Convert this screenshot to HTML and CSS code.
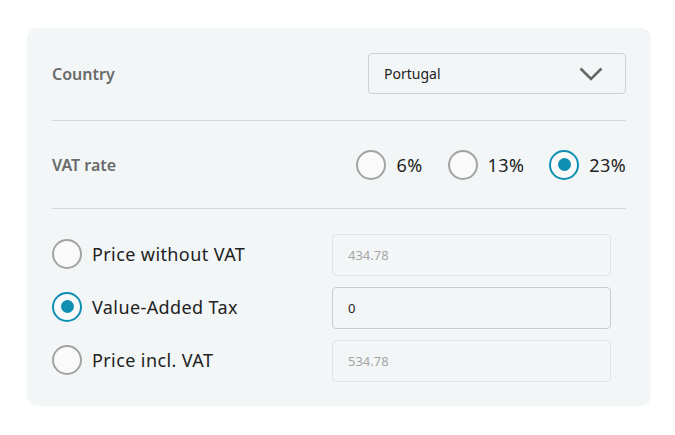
FILE: index.html
```html
<!DOCTYPE html>
<html>
<head>
<meta charset="utf-8">
<link rel="stylesheet" href="styles.css">
</head>
<body>
<div class="card">
  <div class="row first">
    <span class="label">Country</span>
    <div class="select">
      <span>Portugal</span>
      <svg class="chev" width="24" height="14" viewBox="0 0 24 14"><path d="M1.5 1.5 L12 12 L22.5 1.5" fill="none" stroke="#666" stroke-width="2.6"/></svg>
    </div>
  </div>
  <div class="divider"></div>
  <div class="row second">
    <span class="label">VAT rate</span>
    <div class="rates">
      <label class="opt"><span class="radio"></span><span>6%</span></label>
      <label class="opt"><span class="radio"></span><span>13%</span></label>
      <label class="opt"><span class="radio on"></span><span>23%</span></label>
    </div>
  </div>
  <div class="divider"></div>
  <div class="calc">
    <label class="opt big"><span class="radio"></span><span>Price without VAT</span></label>
    <div class="input disabled">434.78</div>
    <label class="opt big"><span class="radio on"></span><span>Value-Added Tax</span></label>
    <div class="input">0</div>
    <label class="opt big"><span class="radio"></span><span>Price incl. VAT</span></label>
    <div class="input disabled">534.78</div>
  </div>
</div>
</body>
</html>
```

FILE: styles.css
```css
* { box-sizing: border-box; }
body {
  margin: 0;
  background: #fff;
  font-family: "Noto Sans", "Open Sans", sans-serif;
  color: #222;
}
.card {
  margin: 28px 0 0 27px;
  width: 624px;
  height: 378px;
  padding: 0 25px;
  background: #f3f6f7;
  border-radius: 10px;
}
.row {
  display: flex;
  align-items: center;
  justify-content: space-between;
}
.row.first { height: 92px; }
.row.second { height: 87px; }
.label {
  font-size: 16px;
  font-weight: 600;
  color: #6a6a6a;
}
.select {
  width: 258px;
  height: 41px;
  border: 1px solid #cfd1d2;
  border-radius: 4px;
  display: flex;
  align-items: center;
  justify-content: space-between;
  padding: 0 22px 0 15px;
  font-size: 14px;
  color: #222;
  margin-top: -2px;
}
.chev { display: block; margin-top: 1px; }
.divider {
  height: 1px;
  background: #d5d7d8;
}
.rates {
  display: flex;
  gap: 25px;
}
.opt {
  display: flex;
  align-items: center;
  gap: 10px;
  font-size: 18px;
  letter-spacing: 0.4px;
  color: #222;
}
.big span:last-child { margin-top: -3px; }
.radio {
  width: 30px;
  height: 30px;
  border-radius: 50%;
  border: 2px solid #a3a3a3;
  background: #fafafa;
  flex: none;
  position: relative;
}
.big .radio { margin-top: -3px; }
.radio.on {
  border-color: #0f8fb2;
}
.radio.on::after {
  content: "";
  position: absolute;
  left: 6.5px;
  top: 6.5px;
  width: 13px;
  height: 13px;
  border-radius: 50%;
  background: #0f8fb2;
}
.calc {
  display: grid;
  grid-template-columns: 280px 279px;
  row-gap: 11px;
  padding-top: 25px;
  align-items: center;
}
.input {
  height: 42px;
  border: 1px solid #c9cbcc;
  border-radius: 4px;
  display: flex;
  align-items: center;
  padding-left: 15px;
  font-size: 13px;
  color: #222;
}
.input.disabled {
  border-color: #e1e4e5;
  color: #a6a6a6;
}
```
